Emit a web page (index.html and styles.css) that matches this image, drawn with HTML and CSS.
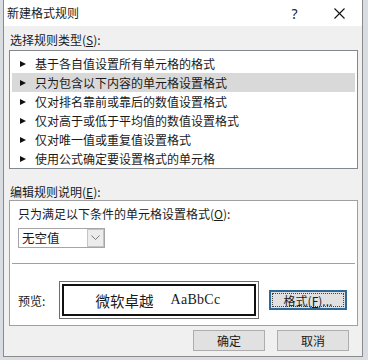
FILE: index.html
```html
<!DOCTYPE html>
<html lang="zh-CN">
<head>
  <meta charset="UTF-8" />
  <title>新建格式规则</title>
  <link rel="stylesheet" href="styles.css">
</head>
<body>
  <div class="dialog">
    <div class="titlebar">
      <span class="title">新建格式规则</span>
      <span class="tb-btn">?</span>
      <span class="tb-btn">
        <svg width="11" height="11" viewBox="0 0 11 11"><path d="M0.5 0.5 L10.5 10.5 M10.5 0.5 L0.5 10.5" stroke="#111" stroke-width="1.1" fill="none"/></svg>
      </span>
    </div>

    <div class="content">
      <div class="label label-first">选择规则类型(<u>S</u>):</div>
      <ul class="rule-list">
        <li><span class="arrow"></span>基于各自值设置所有单元格的格式</li>
        <li class="selected"><span class="arrow"></span>只为包含以下内容的单元格设置格式</li>
        <li><span class="arrow"></span>仅对排名靠前或靠后的数值设置格式</li>
        <li><span class="arrow"></span>仅对高于或低于平均值的数值设置格式</li>
        <li><span class="arrow"></span>仅对唯一值或重复值设置格式</li>
        <li><span class="arrow"></span>使用公式确定要设置格式的单元格</li>
      </ul>

      <div class="label label-edit">编辑规则说明(<u>E</u>):</div>
      <div class="desc-box">
        <div class="desc-top">
          <div class="label">只为满足以下条件的单元格设置格式(<u>O</u>):</div>
          <div class="select">
            <span class="select-text">无空值</span>
            <span class="select-btn">
              <svg width="9" height="6" viewBox="0 0 9 6"><path d="M0.5 0.5 L4.5 4.5 L8.5 0.5" stroke="#7a7a7a" stroke-width="1" fill="none"/></svg>
            </span>
          </div>
        </div>
        <div class="separator"></div>
        <div class="preview-row">
          <span class="preview-label">预览:</span>
          <div class="preview-box">
            <div class="preview-inner">
              <span class="preview-cjk">微软卓越</span>
              <span class="preview-latin">AaBbCc</span>
            </div>
          </div>
          <button class="btn btn-focus"><span class="focus-rect">格式(<u>F</u>)...</span></button>
        </div>
      </div>

      <div class="actions">
        <button class="btn">确定</button>
        <button class="btn">取消</button>
      </div>
    </div>
  </div>
</body>
</html>
```

FILE: styles.css
```css
* {
  box-sizing: border-box;
  margin: 0;
  padding: 0;
}

body {
  width: 368px;
  height: 360px;
  overflow: hidden;
  background: #d9dde2;
  font-family: "Noto Sans CJK SC", "Noto Sans", sans-serif;
  font-size: 12px;
  color: #1a1a1a;
  padding-left: 3px;
}

u {
  text-decoration: underline;
  text-underline-offset: 1px;
}

.dialog {
  width: 360px;
  height: 357px;
  border: 1px solid #8a8a8a;
  border-top: none;
  background: #f0f0f0;
  display: flex;
  flex-direction: column;
}

.titlebar {
  height: 26px;
  background: #ffffff;
  display: flex;
  align-items: center;
}

.title {
  flex: 1;
  padding-left: 3px;
  line-height: 26px;
}

.tb-btn {
  width: 45px;
  height: 26px;
  display: flex;
  align-items: center;
  justify-content: center;
  font-family: "Noto Sans", sans-serif;
  font-size: 14px;
  color: #222;
}

.content {
  padding: 0 4px 0 5px;
}

.label {
  line-height: 16px;
  white-space: nowrap;
}

.label-first {
  padding-top: 6px;
  padding-left: 1px;
  margin-bottom: 2px;
}

.rule-list {
  list-style: none;
  background: #ffffff;
  border: 1px solid #828790;
  padding: 3px 2px 0;
}

.rule-list li {
  height: 19px;
  line-height: 19px;
  padding-left: 8px;
  display: flex;
  align-items: center;
  white-space: nowrap;
}

.rule-list li.selected {
  background: #d9d9d9;
}

.arrow {
  width: 0;
  height: 0;
  border-top: 3.5px solid transparent;
  border-bottom: 3.5px solid transparent;
  border-left: 6px solid #111;
  margin-right: 9px;
}

.label-edit {
  margin-top: 15px;
  padding-left: 1px;
}

.desc-box {
  background: #ffffff;
  border: 1px solid #a0a0a0;
  padding: 5px 0 6px;
}

.desc-top {
  padding-left: 8px;
}

.select {
  margin-top: 6px;
  width: 87px;
  height: 20px;
  border: 1px solid #a5a5a5;
  display: flex;
  align-items: stretch;
  background: #ffffff;
}

.select-text {
  flex: 1;
  padding-left: 3px;
  line-height: 18px;
  font-size: 12.5px;
}

.select-btn {
  width: 17px;
  background: #ececec;
  border: 1px solid #c4c4c4;
  display: flex;
  align-items: center;
  justify-content: center;
}

.separator {
  margin: 15px 2px 0;
  height: 1px;
  background: #a0a0a0;
}

.preview-row {
  margin-top: 17px;
  padding-left: 8px;
  display: flex;
  align-items: center;
}

.preview-label {
  width: 41px;
}

.preview-box {
  width: 200px;
  height: 38px;
  border: 1px solid #6e6e6e;
  padding: 2px;
}

.preview-inner {
  height: 100%;
  border: 2px solid #111;
  display: flex;
  align-items: center;
  justify-content: center;
  gap: 17px;
}

.preview-cjk {
  font-size: 14.5px;
  padding-left: 6px;
}

.preview-latin {
  font-family: "Liberation Serif", serif;
  font-size: 14px;
  letter-spacing: 0.3px;
  padding-right: 8px;
}

.btn {
  width: 72px;
  height: 21px;
  border: 1px solid #adadad;
  background: #e1e1e1;
  font-family: "Noto Sans CJK SC", "Noto Sans", sans-serif;
  font-size: 12px;
  color: #1a1a1a;
}

.btn-focus {
  width: 78px;
  height: 20px;
  margin-left: 10px;
  border: 2px solid #2d6a9a;
  padding: 1px;
  display: flex;
}

.focus-rect {
  flex: 1;
  border: 1px dotted #444;
  line-height: 14px;
}

.actions {
  margin-top: 4px;
  padding-right: 9px;
  display: flex;
  justify-content: flex-end;
  gap: 12px;
}
```
